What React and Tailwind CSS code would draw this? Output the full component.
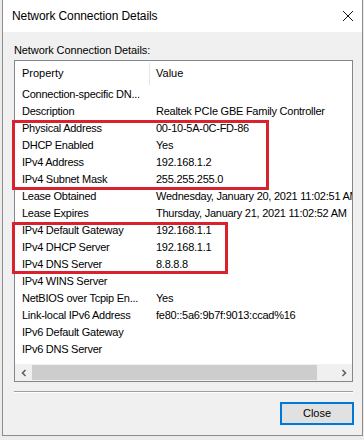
import React from "react";

const rows = [
  ["Connection-specific DN...", ""],
  ["Description", "Realtek PCIe GBE Family Controller"],
  ["Physical Address", "00-10-5A-0C-FD-86"],
  ["DHCP Enabled", "Yes"],
  ["IPv4 Address", "192.168.1.2"],
  ["IPv4 Subnet Mask", "255.255.255.0"],
  ["Lease Obtained", "Wednesday, January 20, 2021 11:02:51 AM"],
  ["Lease Expires", "Thursday, January 21, 2021 11:02:52 AM"],
  ["IPv4 Default Gateway", "192.168.1.1"],
  ["IPv4 DHCP Server", "192.168.1.1"],
  ["IPv4 DNS Server", "8.8.8.8"],
  ["IPv4 WINS Server", ""],
  ["NetBIOS over Tcpip En...", "Yes"],
  ["Link-local IPv6 Address", "fe80::5a6:9b7f:9013:ccad%16"],
  ["IPv6 Default Gateway", ""],
  ["IPv6 DNS Server", ""],
];

function App() {
  return (
    <div className="relative w-[364px] h-[440px] bg-[#ececec] overflow-hidden text-black" style={{ fontFamily: '"Liberation Sans", Arial, sans-serif' }}>
      <div className="ml-[2px] w-[361px] h-[436px] border-x border-b border-[#8c8c8c] bg-[#f0f0f0] flex flex-col">
        {/* title bar */}
        <div className="h-[32px] bg-white flex items-center pl-[9px] pr-[7px] shrink-0">
          <span className="text-[12px] flex-1 tracking-[-0.1px]">Network Connection Details</span>
          <svg width="12" height="12" viewBox="0 0 12 12" className="mr-[1px]">
            <path d="M1 1 L11 11 M11 1 L1 11" stroke="#111" strokeWidth="1" fill="none" />
          </svg>
        </div>

        <div className="flex flex-col pl-[11px] pr-[9px] pt-[12px]">
          <div className="h-[13px] leading-[13px] text-[11px] tracking-[-0.1px]">Network Connection Details:</div>

          {/* list view */}
          <div className="mt-[3px] h-[322px] border border-[#828790] bg-white flex flex-col">
            <div className="h-[25px] flex items-center text-[11px] shrink-0">
              <div className="w-[134px] pl-[7px]">Property</div>
              <div className="w-px h-[22px] bg-[#e5e5e5]" />
              <div className="pl-[6px]">Value</div>
            </div>
            <div className="flex-1 overflow-hidden">
              {rows.map(([k, v], i) => (
                <div key={i} className="h-[17px] flex items-center text-[11px] tracking-[-0.25px] whitespace-nowrap">
                  <div className="w-[134px] pl-[7px] shrink-0">{k}</div>
                  <div className="pl-[7px]">{v}</div>
                </div>
              ))}
            </div>
            {/* horizontal scrollbar */}
            <div className="h-[17px] flex bg-[#f0f0f0] shrink-0">
              <div className="w-[17px] flex items-center justify-center">
                <svg width="8" height="8" viewBox="0 0 8 8">
                  <path d="M5.5 1 L2.5 4 L5.5 7" stroke="#606060" strokeWidth="1.6" fill="none" />
                </svg>
              </div>
              <div className="w-[285px] my-[1px] bg-[#cdcdcd]" />
              <div className="flex-1" />
              <div className="w-[17px] flex items-center justify-center">
                <svg width="8" height="8" viewBox="0 0 8 8">
                  <path d="M2.5 1 L5.5 4 L2.5 7" stroke="#606060" strokeWidth="1.6" fill="none" />
                </svg>
              </div>
            </div>
          </div>

          <div className="mt-[9px] h-px bg-[#a0a0a0]" />
          <div className="h-px bg-white" />

          <div className="mt-[9px] flex justify-end mr-[-1px]">
            <button className="w-[74px] h-[23px] border-2 border-[#0078d7] bg-[#e1e1e1] text-[11px] flex items-center justify-center">
              Close
            </button>
          </div>
        </div>
      </div>

      {/* red annotation boxes */}
      <div className="absolute left-[12px] top-[120px] w-[257px] h-[70px] border-[3px] border-[#d8232f]" />
      <div className="absolute left-[12px] top-[222px] w-[216px] h-[52px] border-[3px] border-[#d8232f]" />
    </div>
  );
}

export default App;
